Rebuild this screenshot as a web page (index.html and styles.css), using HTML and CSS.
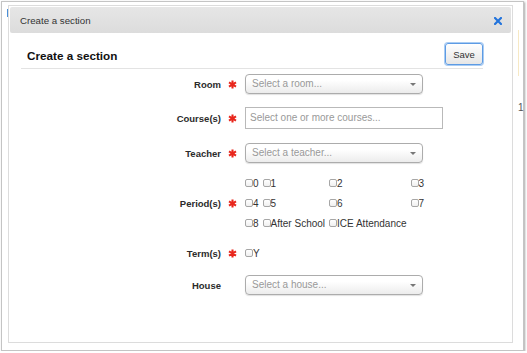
FILE: index.html
```html
<!DOCTYPE html>
<html lang="en">
<head>
    <meta charset="UTF-8">
    <title>Create a section</title>
    <link rel="stylesheet" href="styles.css">
</head>
<body>
    <div class="window">
        <span class="bg-mark blue"></span>
        <span class="bg-mark yellow"></span>
        <span class="bg-num">1</span>

        <div class="dialog">
            <div class="titlebar">
                <span class="title">Create a section</span>
                <svg class="close" width="8" height="8" viewBox="0 0 8 8">
                    <path d="M1 1 L7 7 M7 1 L1 7" stroke="#2374dc" stroke-width="2.2" stroke-linecap="square"/>
                </svg>
            </div>

            <div class="content">
                <div class="head">
                    <h2>Create a section</h2>
                    <button class="save">Save</button>
                </div>

                <div class="form">
                    <div class="row r-room">
                        <label class="lbl">Room</label>
                        <span class="req"><svg width="9" height="9" viewBox="0 0 10 10"><path d="M5 0.5 V9.5 M1.1 2.75 L8.9 7.25 M8.9 2.75 L1.1 7.25" stroke="#e8261c" stroke-width="2.3"/></svg></span>
                        <div class="select">Select a room...<i class="arrow"></i></div>
                    </div>
                    <div class="row r-course">
                        <label class="lbl">Course(s)</label>
                        <span class="req"><svg width="9" height="9" viewBox="0 0 10 10"><path d="M5 0.5 V9.5 M1.1 2.75 L8.9 7.25 M8.9 2.75 L1.1 7.25" stroke="#e8261c" stroke-width="2.3"/></svg></span>
                        <div class="input">Select one or more courses...</div>
                    </div>
                    <div class="row r-teacher">
                        <label class="lbl">Teacher</label>
                        <span class="req"><svg width="9" height="9" viewBox="0 0 10 10"><path d="M5 0.5 V9.5 M1.1 2.75 L8.9 7.25 M8.9 2.75 L1.1 7.25" stroke="#e8261c" stroke-width="2.3"/></svg></span>
                        <div class="select">Select a teacher...<i class="arrow"></i></div>
                    </div>
                    <div class="row r-period">
                        <label class="lbl">Period(s)</label>
                        <span class="req"><svg width="9" height="9" viewBox="0 0 10 10"><path d="M5 0.5 V9.5 M1.1 2.75 L8.9 7.25 M8.9 2.75 L1.1 7.25" stroke="#e8261c" stroke-width="2.3"/></svg></span>
                        <div class="checks">
                            <span class="chk"><i class="box"></i>0</span>
                            <span class="chk"><i class="box"></i>1</span>
                            <span class="chk"><i class="box"></i>2</span>
                            <span class="chk"><i class="box"></i>3</span>
                            <span class="chk"><i class="box"></i>4</span>
                            <span class="chk"><i class="box"></i>5</span>
                            <span class="chk"><i class="box"></i>6</span>
                            <span class="chk"><i class="box"></i>7</span>
                            <span class="chk"><i class="box"></i>8</span>
                            <span class="chk"><i class="box"></i>After School</span>
                            <span class="chk"><i class="box"></i>ICE Attendance</span>
                        </div>
                    </div>
                    <div class="row r-term">
                        <label class="lbl">Term(s)</label>
                        <span class="req"><svg width="9" height="9" viewBox="0 0 10 10"><path d="M5 0.5 V9.5 M1.1 2.75 L8.9 7.25 M8.9 2.75 L1.1 7.25" stroke="#e8261c" stroke-width="2.3"/></svg></span>
                        <div class="checks single">
                            <span class="chk"><i class="box"></i>Y</span>
                        </div>
                    </div>
                    <div class="row r-house">
                        <label class="lbl">House</label>
                        <span class="req"></span>
                        <div class="select">Select a house...<i class="arrow"></i></div>
                    </div>
                </div>
            </div>
        </div>
    </div>
</body>
</html>
```

FILE: styles.css
```css
* {
    margin: 0;
    padding: 0;
    box-sizing: border-box;
}

body {
    background: #fff;
    font-family: "Liberation Sans", Arial, sans-serif;
    color: #333;
}

/* screenshot frame */
.window {
    position: relative;
    width: 523px;
    height: 350px;
    margin: 1px 0 0 1px;
    border: 1px solid #c4c4c4;
    box-shadow: 1px 1px 2px rgba(0, 0, 0, 0.35);
    background: #fff;
    padding: 3px 0 0 6px;
}

.bg-mark {
    position: absolute;
    width: 1px;
}

.bg-mark.blue {
    left: 5px;
    top: 7px;
    height: 8px;
    background: #4a8fd8;
}

.bg-mark.yellow {
    left: 516px;
    top: 28px;
    height: 46px;
    background: #f7e9c4;
}

.bg-num {
    position: absolute;
    left: 516px;
    top: 100px;
    font-size: 10px;
    color: #555;
}

.dialog {
    position: relative;
    width: 505px;
    height: 338px;
    border: 1px solid #dcdcdc;
    padding: 1px;
    background: #fff;
}

.titlebar {
    height: 26px;
    background: linear-gradient(#e6e6e6, #dcdcdc);
    border-radius: 2px;
    display: flex;
    align-items: center;
    justify-content: space-between;
    padding: 0 9px 0 10px;
}

.title {
    font-size: 9.7px;
    color: #333;
}

.close {
    display: block;
    margin-top: 2px;
}

.content {
    padding: 0 28px 0 11px;
}

.head {
    display: flex;
    justify-content: space-between;
    align-items: center;
    padding: 10px 0 3px 6px;
    border-bottom: 1px solid #e3e3e3;
}

.head h2 {
    font-size: 11.7px;
    font-weight: bold;
    color: #111;
    padding-top: 3px;
}

.save {
    width: 38px;
    height: 22px;
    font-family: "Liberation Sans", Arial, sans-serif;
    font-size: 9.5px;
    color: #333;
    background: linear-gradient(#fff, #e6e6e6);
    border: 1px solid #5d9be4;
    border-radius: 3px;
    box-shadow: 0 0 0 1px #a9ccf3;
}

/* form */
.form {
    padding-top: 5px;
}

.row {
    display: flex;
    align-items: center;
}

.lbl {
    width: 200px;
    text-align: right;
    font-size: 9.5px;
    font-weight: bold;
    color: #2b2b2b;
}

.req {
    width: 24px;
    padding-left: 7px;
    display: flex;
    align-items: center;
}

.req svg {
    display: block;
}

.r-course { margin-top: 13px; }
.r-teacher { margin-top: 14px; }
.r-period { margin-top: 10px; }
.r-term { margin-top: 10px; }
.r-house { margin-top: 12px; }

.select {
    position: relative;
    width: 178px;
    height: 20px;
    border: 1px solid #acacac;
    border-radius: 4px;
    background: linear-gradient(#fff 30%, #ececec);
    box-shadow: 0 1px 1px rgba(0, 0, 0, 0.12);
    font-size: 10px;
    color: #999;
    line-height: 18px;
    padding-left: 6px;
}

.arrow {
    position: absolute;
    right: 6px;
    top: 8px;
    border-left: 3px solid transparent;
    border-right: 3px solid transparent;
    border-top: 3px solid #777;
}

.input {
    width: 198px;
    height: 22px;
    border: 1px solid #b9b9b9;
    font-size: 10px;
    color: #999;
    line-height: 20px;
    padding-left: 4px;
}

.checks {
    display: grid;
    grid-template-columns: repeat(4, auto);
    justify-content: start;
    column-gap: 4px;
}

.chk {
    display: flex;
    align-items: center;
    height: 20px;
    font-size: 10px;
    color: #333;
    white-space: nowrap;
}

.box {
    display: block;
    width: 8px;
    height: 8px;
    border: 1px solid #a6a6a6;
    border-radius: 2px;
    background: linear-gradient(#fff, #f0f0f0);
}
```
